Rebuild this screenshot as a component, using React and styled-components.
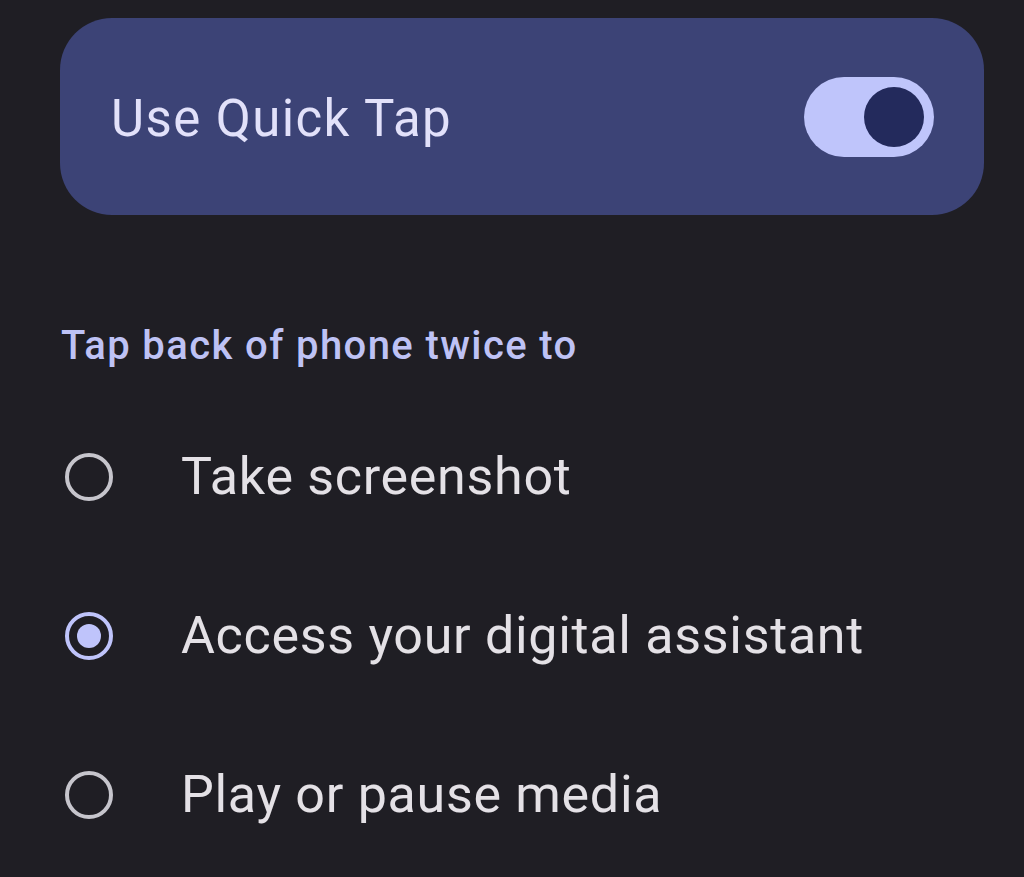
import React, { useState } from "react";
import styled, { createGlobalStyle } from "styled-components";

const Global = createGlobalStyle`
  html, body { margin: 0; padding: 0; background: #1f1e24; }
  body { font-family: Roboto, "Noto Sans", sans-serif; }
`;

const Page = styled.div`
  width: 1024px;
  height: 877px;
  background: #1f1e24;
  box-sizing: border-box;
  padding: 18px 40px 0 60px;
  overflow: hidden;
`;

const Card = styled.div`
  width: 924px;
  height: 197px;
  box-sizing: border-box;
  border-radius: 52px;
  background: #3c4376;
  display: flex;
  align-items: center;
  justify-content: space-between;
  padding: 0 50px 0 51px;
`;

const CardTitle = styled.div`
  color: #e2e1fa;
  font-size: 51px;
  font-weight: 400;
  letter-spacing: 1.4px;
  line-height: 60px;
  padding-top: 4px;
`;

const Track = styled.button`
  width: 130px;
  height: 80px;
  border-radius: 40px;
  border: none;
  padding: 0 10px;
  background: #bfc5fb;
  display: flex;
  align-items: center;
  justify-content: ${(p) => (p.$on ? "flex-end" : "flex-start")};
  cursor: pointer;
`;

const Thumb = styled.span`
  width: 60px;
  height: 60px;
  border-radius: 50%;
  background: #232a5c;
`;

const Section = styled.div`
  margin-left: 1px;
  margin-top: 108px;
  color: #bec2f5;
  font-size: 40px;
  font-weight: 500;
  letter-spacing: 1.4px;
  line-height: 46px;
`;

const List = styled.div`
  margin-top: 28px;
  display: flex;
  flex-direction: column;
`;

const Row = styled.label`
  height: 159px;
  display: flex;
  align-items: center;
  cursor: pointer;
`;

const Radio = styled.span`
  width: 48px;
  height: 48px;
  box-sizing: border-box;
  margin-left: 5px;
  border-radius: 50%;
  border: 4px solid ${(p) => (p.$checked ? "#bfc4fb" : "#c6c5cc")};
  display: flex;
  align-items: center;
  justify-content: center;
  flex-shrink: 0;
`;

const Dot = styled.span`
  width: 24px;
  height: 24px;
  border-radius: 50%;
  background: #bfc4fb;
`;

const Label = styled.span`
  margin-left: 68px;
  color: #e4e1e6;
  font-size: 52px;
  font-weight: 400;
  letter-spacing: 0.7px;
`;

const options = [
  "Take screenshot",
  "Access your digital assistant",
  "Play or pause media",
];

export default function App() {
  const [on, setOn] = useState(true);
  const [sel, setSel] = useState(1);
  return (
    <Page>
      <Global />
      <Card>
        <CardTitle>Use Quick Tap</CardTitle>
        <Track $on={on} onClick={() => setOn(!on)} aria-label="Use Quick Tap">
          <Thumb />
        </Track>
      </Card>
      <Section>Tap back of phone twice to</Section>
      <List>
        {options.map((o, i) => (
          <Row key={o} onClick={() => setSel(i)}>
            <Radio $checked={sel === i}>{sel === i && <Dot />}</Radio>
            <Label>{o}</Label>
          </Row>
        ))}
      </List>
    </Page>
  );
}
